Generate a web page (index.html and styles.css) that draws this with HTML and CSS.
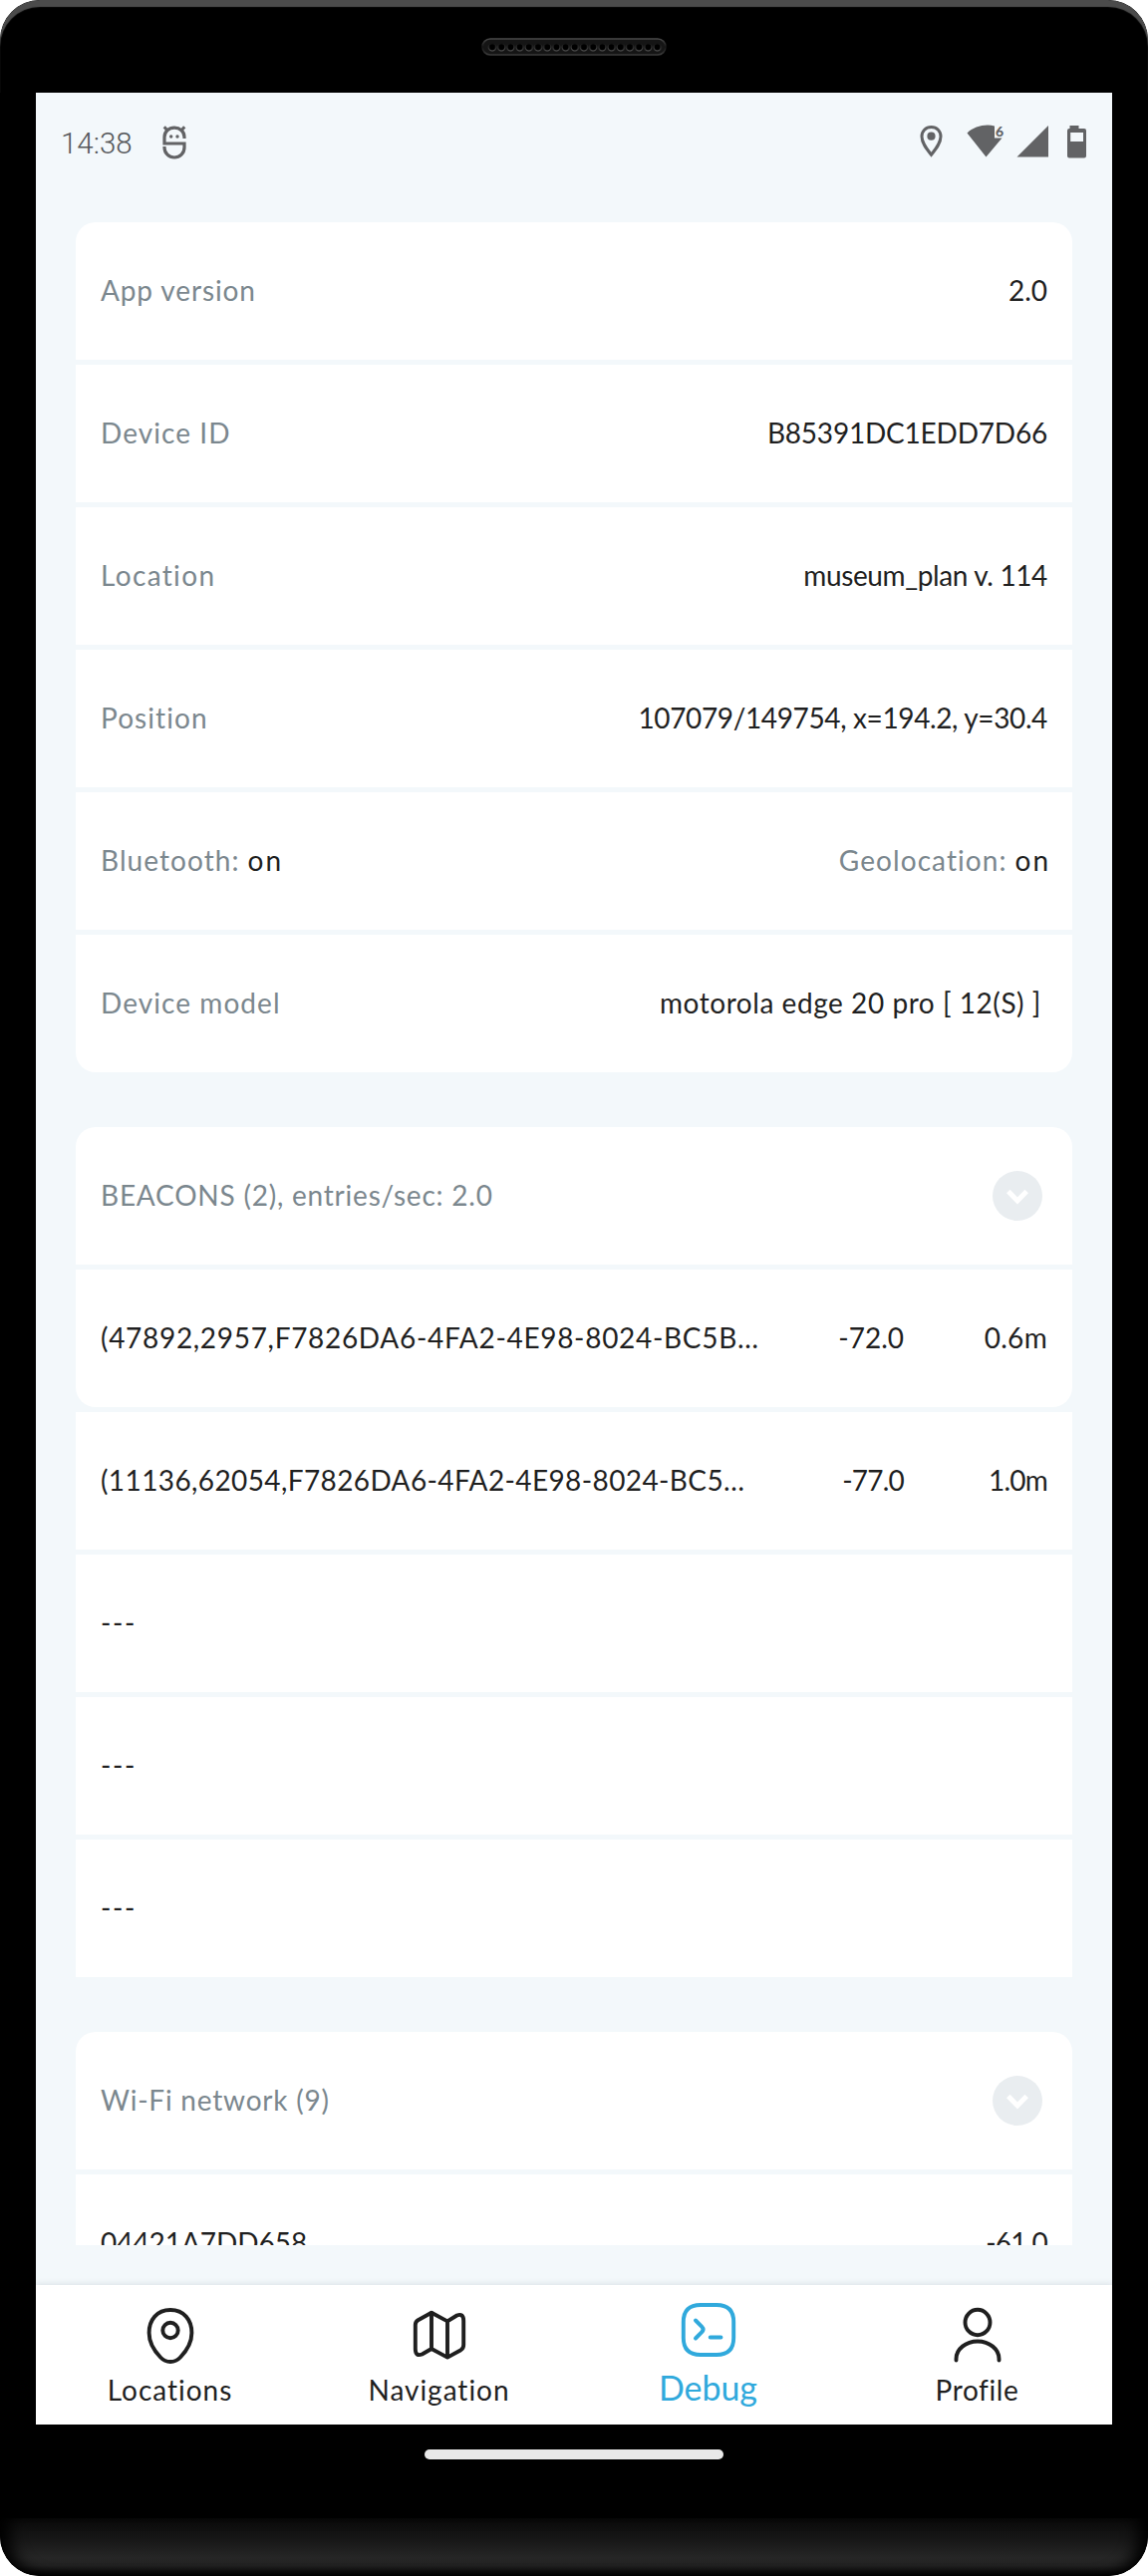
FILE: index.html
```html
<!DOCTYPE html>
<html lang="en">
<head>
<meta charset="utf-8">
<title>Debug</title>
<link rel="stylesheet" href="styles.css">
</head>
<body>
<div class="phone">
  <div class="bezel-top">
    <svg class="speaker" width="186" height="18" viewBox="0 0 186 18">
      <defs>
        <linearGradient id="rim" x1="0" y1="0" x2="0" y2="1"><stop offset="0" stop-color="#4a4a4a"/><stop offset=".5" stop-color="#161616"/><stop offset="1" stop-color="#3c3c3c"/></linearGradient>
        <linearGradient id="hole" x1="0" y1="0" x2="0" y2="1"><stop offset="0" stop-color="#151515"/><stop offset="1" stop-color="#5c5c5c"/></linearGradient>
        <pattern id="holes" x="6.4" y="0" width="9.2" height="18" patternUnits="userSpaceOnUse">
          <circle cx="4.6" cy="9.3" r="3.6" fill="#000" stroke="url(#hole)" stroke-width="1"/>
        </pattern>
      </defs>
      <rect x="1" y="1" width="184" height="16" rx="8" fill="#151515" stroke="url(#rim)" stroke-width="1.6"/>
      <rect x="6.4" y="0" width="174.8" height="18" fill="url(#holes)"/>
    </svg>
  </div>

  <div class="screen">
    <header class="status">
      <div class="status-left">
        <span class="time">14:38</span>
        <svg width="24" height="34" viewBox="0 0 24 34" fill="none" stroke="#626365" stroke-width="3.200">
          <path d="M1.800 1.200 5 5M22.200 1.200 19 5" stroke-width="3"/>
          <path d="M22 13V11.500C22 6 17.500 2.200 12 2.200S2 6 2 11.500V18H22V22C22 27.700 17.500 32 12 32S2 27.700 2 22V21"/>
          <circle cx="8.700" cy="11" r="1.700" fill="#626365" stroke="none"/><circle cx="15" cy="11" r="1.700" fill="#626365" stroke="none"/>
        </svg>
      </div>
      <svg class="status-icons" width="168" height="36" viewBox="0 0 168 36" fill="#626365">
        <path d="M12.500 4.500C6.800 4.500 3 8.700 3 14c0 6.500 4.800 12.300 9.500 18.300C17.200 26.300 22 20.500 22 14c0-5.300-3.800-9.500-9.500-9.500Z" fill="none" stroke="#626365" stroke-width="3"/>
        <circle cx="12.500" cy="13.700" r="4.100"/>
        <path d="M48.500 10.500C55.500 4 66.500 1 76 3.500V15.500h7.500L67.500 34.500Z"/>
        <text class="wifi-gen" x="77" y="14">6</text>
        <path d="M130 3V34.500H98.500Z"/>
        <path d="M151.500 3h9v3h5.500q2 0 2 2V33.500q0 2-2 2H151q-2 0-2-2V8q0-2 2-2h.5ZM152.200 10v9h12.800v-9Z" fill-rule="evenodd"/>
      </svg>
    </header>

    <main class="content">
      <section class="card">
        <div class="row"><span class="label t-app">App version</span><span class="value">2.0</span></div>
        <div class="row"><span class="label">Device ID</span><span class="value t-id">B85391DC1EDD7D66</span></div>
        <div class="row"><span class="label t-loc">Location</span><span class="value t-tight">museum_plan v. 114</span></div>
        <div class="row"><span class="label">Position</span><span class="value t-tight">107079/149754, x=194.2, y=30.4</span></div>
        <div class="row">
          <span class="pair"><span class="label">Bluetooth:</span><span class="value t-on">on</span></span>
          <span class="pair"><span class="label">Geolocation:</span><span class="value t-on">on</span></span>
        </div>
        <div class="row"><span class="label">Device model</span><span class="value t-model">motorola edge 20 pro [ 12(S) ]</span></div>
      </section>

      <section class="card">
        <div class="row"><span class="label t-head">BEACONS (2), entries/sec: 2.0</span>
          <svg class="toggle" viewBox="0 0 50 50"><circle cx="25" cy="25" r="25" fill="#e9edf0"/><path d="M15.800 20.500 25 30l9.200-9.500" fill="none" stroke="#fff" stroke-width="5"/></svg></div>
        <div class="row row-last"><span class="name t-b1">(47892,2957,F7826DA6-4FA2-4E98-8024-BC5B…</span><span class="rssi">-72.0</span><span class="dist">0.6m</span></div>
        <div class="row"><span class="name t-b2">(11136,62054,F7826DA6-4FA2-4E98-8024-BC5…</span><span class="rssi t-neg">-77.0</span><span class="dist t-neg">1.0m</span></div>
        <div class="row"><span class="name t-dash">---</span></div>
        <div class="row"><span class="name t-dash">---</span></div>
        <div class="row row-open"><span class="name t-dash">---</span></div>
      </section>

      <section class="card">
        <div class="row"><span class="label t-head">Wi-Fi network (9)</span>
          <svg class="toggle" viewBox="0 0 50 50"><circle cx="25" cy="25" r="25" fill="#e9edf0"/><path d="M15.800 20.500 25 30l9.200-9.500" fill="none" stroke="#fff" stroke-width="5"/></svg></div>
        <div class="row"><span class="name t-mac">04421A7DD658</span><span class="value t-neg">-61.0</span></div>
      </section>
    </main>

    <nav class="tabs">
      <a class="tab">
        <svg width="60" height="60" viewBox="0 0 60 60"><path d="M30 5C16.500 5 8.600 15 8.600 28c0 10 5.600 18.500 11.400 24.500 3 3.200 6 4.500 10 4.500s7-1.300 10-4.500C45.800 46.500 51.400 38 51.400 28 51.400 15 43.500 5 30 5Z"/><circle cx="30" cy="25.500" r="7.700"/></svg>
        <span>Locations</span>
      </a>
      <a class="tab">
        <svg width="60" height="60" viewBox="0 0 60 60"><path d="M22 7.800 8.500 15.200Q5.800 17 5.800 20V44q0 8 6.700 5.500L22 44l16 8.600 13.500-7.400Q54.200 43.500 54.200 40V16q0-8-6.700-5.500L38 16.400Z" stroke-linejoin="round"/><path d="M22 8V44M38 16.500V52"/></svg>
        <span>Navigation</span>
      </a>
      <a class="tab tab-active">
        <svg width="60" height="60" viewBox="0 0 60 60"><path d="M22 5H38Q55.200 5 55.200 22V38Q55.200 55 38 55H22Q4.800 55 4.800 38V22Q4.800 5 22 5Z"/><path d="M17 20.500 23.300 26.800Q25.800 29.500 23.300 32.200L17 38.500M31.700 37.500H42.500"/></svg>
        <span>Debug</span>
      </a>
      <a class="tab">
        <svg width="60" height="60" viewBox="0 0 60 60"><ellipse cx="30" cy="17.500" rx="12.500" ry="12.700"/><path d="M8.500 55.500V54a21.500 17.500 0 0 1 43 0v1.500"/></svg>
        <span class="t-profile">Profile</span>
      </a>
    </nav>
  </div>

  <div class="gesture"><div class="pill"></div></div>
  <div class="chin"></div>
</div>
</body>
</html>
```
FILE: styles.css
```css
* { box-sizing: border-box; }

body {
  margin: 0;
  background: #fff;
  font-family: Lato, "Open Sans", sans-serif;
  font-size: 28px;
  line-height: 34px;
  color: #1f1f1f;
}

.phone {
  width: 1152px;
  height: 2585px;
  display: flex;
  flex-direction: column;
  background: #000;
  border-radius: 40px;
  overflow: hidden;
}

/* Bezel */
.bezel-top {
  flex: none;
  height: 93px;
  display: flex;
  justify-content: center;
  padding-top: 38px;
  border-radius: 40px 40px 0 0;
  box-shadow: inset 0 7px 1px #4b4b4b;
}

.speaker { margin-right: 1px; }

.gesture {
  flex: none;
  height: 94px;
  display: flex;
  justify-content: center;
  padding-top: 25px;
}

.pill {
  width: 300px;
  height: 10px;
  border-radius: 5px;
  background: #e9e9e9;
}

.chin {
  flex: 1;
  border-radius: 0 0 40px 40px;
  background: linear-gradient(#0b0b0b, #161616 35%, #262626 68%, #222 82%, #000);
  box-shadow: inset 16px 0 16px -6px #000, inset -16px 0 16px -6px #000;
}

/* Screen */
.screen {
  flex: none;
  width: 1080px;
  height: 2340px;
  margin: 0 auto;
  display: flex;
  flex-direction: column;
  background: #f3f8fb;
}

.status {
  flex: none;
  height: 130px;
  display: flex;
  justify-content: space-between;
  align-items: flex-start;
  padding: 30px 26px 0 25px;
}

.status-left {
  display: flex;
  gap: 28px;
  padding-top: 3px;
}

.time {
  width: 74px;
  padding-top: 1px;
  font-family: Roboto, sans-serif;
  font-size: 29.500px;
  font-weight: 300;
  line-height: 34px;
  color: #55575a;
}

.wifi-gen {
  font: 900 14px Lato, sans-serif;
}

.content {
  flex: none;
  height: 2030px;
  padding: 0 40px;
  display: flex;
  flex-direction: column;
  gap: 55px;
  overflow: hidden;
}

.card {
  flex: none;
  display: flex;
  flex-direction: column;
  gap: 5px;
}

.row {
  height: 138px;
  display: flex;
  align-items: center;
  justify-content: space-between;
  padding: 0 25px 2px;
  background: #fff;
  white-space: nowrap;
}

.row:first-child { border-radius: 20px 20px 0 0; }
.row:last-child,
.row-last { border-radius: 0 0 20px 20px; }
.row.row-open { border-radius: 0; }

.label { color: #7b878e; letter-spacing: 1.07px; }
.name { flex: 1; }
.rssi { text-align: right; }
.dist { width: 144px; text-align: right; letter-spacing: .3px; }
.pair { display: flex; gap: 8px; }

.toggle {
  width: 50px;
  height: 50px;
  margin: 2px 5px 0 0;
}

/* Tracking of individual strings */
.t-app { letter-spacing: .89px; }
.t-loc { letter-spacing: 1.350px; }
.t-id { letter-spacing: -.2px; }
.t-tight { letter-spacing: -.37px; }
.t-on { letter-spacing: 2px; margin-right: -3px; }
.t-model { letter-spacing: .550px; margin-right: 6px; }
.t-head { letter-spacing: .78px; }
.t-b1 { letter-spacing: .69px; }
.t-b2 { letter-spacing: .39px; }
.t-neg { letter-spacing: -.800px; }
.t-dash { letter-spacing: 1.6px; }
.t-mac { letter-spacing: -.05px; }

/* Tab bar */
.tabs {
  flex: none;
  height: 140px;
  margin-top: auto;
  display: grid;
  grid-template-columns: repeat(4, 1fr);
  background: #fff;
  box-shadow: 0 -1px 6px rgba(60, 80, 90, .13);
  clip-path: inset(-12px 0 0 0);
}

.tab {
  display: flex;
  flex-direction: column;
  align-items: center;
  padding-top: 20px;
  letter-spacing: .98px;
}

.tab svg {
  display: block;
  fill: none;
  stroke: currentColor;
  stroke-width: 3.900;
  stroke-linecap: round;
}

.tab span { margin: 8px 1px 0 0; }
.tab .t-profile { letter-spacing: .6px; }

.tab-active {
  padding-top: 15px;
  color: #30a9dc;
  font-size: 34px;
  letter-spacing: -.05px;
}

.tab-active span { margin-top: 11px; }
```
